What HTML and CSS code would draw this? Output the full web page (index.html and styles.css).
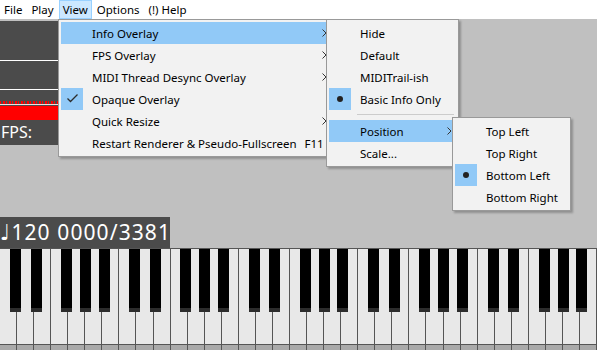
FILE: index.html
```html
<!DOCTYPE html>
<html>
<head>
<meta charset="utf-8">
<title>Piano View</title>
<link rel="stylesheet" href="styles.css">
</head>
<body>

<div class="menubar">
	<span class="mb-item">File</span>
	<span class="mb-item">Play</span>
	<span class="mb-item mb-open">View</span>
	<span class="mb-item">Options</span>
	<span class="mb-item">(!) Help</span>
</div>

<div class="stage">
	<div class="overlay">
		<div class="ov-block ov-first"></div>
		<div class="ov-line"></div>
		<div class="ov-block ov-second"></div>
		<div class="ov-line"></div>
		<div class="ov-graph"><div class="ov-ticks"></div></div>
		<div class="ov-red"></div>
		<div class="ov-fps">FPS:</div>
	</div>

	<div class="bottom">
		<div class="info"><span class="note">&#9833;</span>120 0000/3381</div>
		<div class="piano" id="piano"></div>
	</div>
</div>

<!-- View menu -->
<div class="menu menu-view">
	<div class="mi hot"><span class="mi-icon"></span><span class="mi-label">Info Overlay</span><span class="mi-arrow"></span></div>
	<div class="mi"><span class="mi-icon"></span><span class="mi-label">FPS Overlay</span><span class="mi-arrow"></span></div>
	<div class="mi"><span class="mi-icon"></span><span class="mi-label">MIDI Thread Desync Overlay</span><span class="mi-arrow"></span></div>
	<div class="mi"><span class="mi-icon checked"><svg width="22" height="22" viewBox="0 0 22 22"><polyline points="6.5,10.5 9.5,13.5 16.5,6.5" fill="none" stroke="#2b2b2b" stroke-width="1.3"/></svg></span><span class="mi-label">Opaque Overlay</span></div>
	<div class="mi"><span class="mi-icon"></span><span class="mi-label">Quick Resize</span><span class="mi-arrow"></span></div>
	<div class="mi"><span class="mi-icon"></span><span class="mi-label">Restart Renderer &amp; Pseudo-Fullscreen</span><span class="mi-key">F11</span></div>
</div>

<!-- Info Overlay submenu -->
<div class="menu menu-info">
	<div class="mi"><span class="mi-icon"></span><span class="mi-label">Hide</span></div>
	<div class="mi"><span class="mi-icon"></span><span class="mi-label">Default</span></div>
	<div class="mi"><span class="mi-icon"></span><span class="mi-label">MIDITrail-ish</span></div>
	<div class="mi"><span class="mi-icon checked"><i class="dot"></i></span><span class="mi-label">Basic Info Only</span></div>
	<div class="sep"></div>
	<div class="mi hot"><span class="mi-icon"></span><span class="mi-label">Position</span><span class="mi-arrow"></span></div>
	<div class="mi"><span class="mi-icon"></span><span class="mi-label">Scale...</span></div>
</div>

<!-- Position submenu -->
<div class="menu menu-pos">
	<div class="mi"><span class="mi-icon"></span><span class="mi-label">Top Left</span></div>
	<div class="mi"><span class="mi-icon"></span><span class="mi-label">Top Right</span></div>
	<div class="mi"><span class="mi-icon checked"><i class="dot"></i></span><span class="mi-label">Bottom Left</span></div>
	<div class="mi"><span class="mi-icon"></span><span class="mi-label">Bottom Right</span></div>
</div>

<script type="text/javascript">
	var piano=document.getElementById("piano");
	var blacks=["cs","ds","fs","gs","as"];
	for(var o=0;o<5;o++){
		var oct=document.createElement("div");
		oct.className="octave";
		for(var w=0;w<7;w++){
			var k=document.createElement("div");
			k.className="wkey";
			oct.appendChild(k);
		}
		for(var b=0;b<blacks.length;b++){
			var bk=document.createElement("div");
			bk.className="bkey "+blacks[b];
			oct.appendChild(bk);
		}
		piano.appendChild(oct);
	}
	// arrows
	var arrows=document.querySelectorAll(".mi-arrow");
	for(var i=0;i<arrows.length;i++){
		arrows[i].innerHTML='<svg width="5" height="8" viewBox="0 0 5 8"><polyline points="0.5,0.5 4,4 0.5,7.5" fill="none" stroke="#333" stroke-width="1"/></svg>';
	}
</script>
</body>
</html>
```
FILE: styles.css
```css
*{margin:0;padding:0;box-sizing:border-box;}
html,body{width:597px;height:350px;overflow:hidden;}
body{background:#c0c0c0;font:11.5px "Noto Sans","Open Sans",Arial,sans-serif;color:#000;display:flex;flex-direction:column;position:relative;}

/* menu bar */
.menubar{height:19px;background:#fff;display:flex;align-items:center;gap:1px;}
.mb-item{height:19px;line-height:17px;padding:0 3px;border:1px solid transparent;}
.mb-open{background:#cce8ff;border-color:#99d1ff;}

/* stage */
.stage{flex:1;display:flex;flex-direction:column;padding-top:2px;}
.overlay{width:200px;background:#4b4b4b;display:flex;flex-direction:column;}
.ov-first{height:39px;}
.ov-second{height:28px;}
.ov-line{height:1px;background:#fff;}
.ov-graph{height:16px;display:flex;flex-direction:column;justify-content:flex-end;padding-bottom:1px;}
.ov-ticks{height:4px;border-bottom:1px solid #f4dede;background:repeating-linear-gradient(90deg,#f00 0 1px,transparent 1px 3px,#f00 3px 5px,transparent 5px 6px);}
.ov-red{height:14px;background:#f00;}
.ov-fps{height:25px;line-height:24px;font-size:16px;color:#fff;padding-left:1px;}

.bottom{margin-top:auto;display:flex;flex-direction:column;}
.info{align-self:flex-start;width:170px;height:31px;background:#4b4b4b;color:#fff;font-size:21px;line-height:31px;padding-left:0;white-space:nowrap;letter-spacing:1.1px;}
.note{font-family:"DejaVu Sans",sans-serif;font-size:22px;letter-spacing:0;margin-right:1px;}

/* piano */
.piano{height:102px;border-top:1px solid #555;display:flex;}
.octave{flex:1;display:flex;position:relative;}
.wkey{flex:1;background:linear-gradient(#e8e8e8 0 95px,#555 95px 96px,#a9a9a9 96px);border-right:1px solid #555;}
.bkey{position:absolute;top:0;width:11px;height:63px;background:#000;border-bottom:4px solid #2c2c2c;}
.cs{left:10px;}
.ds{left:30.5px;}
.fs{left:61px;}
.gs{left:80px;}
.as{left:98.5px;}

/* popup menus */
.menu{position:absolute;background:#f2f2f2;border:1px solid #999;padding:2px;box-shadow:2px 2px 2px rgba(0,0,0,0.25);}
.menu-view{left:58px;top:19px;width:276px;}
.menu-info{left:326px;top:19px;width:133px;}
.menu-pos{left:452px;top:117px;width:119px;}
.mi{height:22px;display:flex;align-items:center;position:relative;white-space:nowrap;}
.mi.hot{background:#91c9f7;}
.mi-icon{width:22px;height:22px;flex:none;display:flex;align-items:center;justify-content:center;}
.mi-icon.checked{background:#91c9f7;}
.mi-label{padding-left:9px;}
.mi-key{margin-left:auto;padding-left:8px;margin-right:17px;}
.mi-arrow{position:absolute;right:4px;top:7px;width:5px;height:8px;display:flex;}
.dot{display:block;width:6px;height:6px;border-radius:50%;background:#222;}
.sep{height:10px;margin-left:28px;margin-right:2px;background:linear-gradient(transparent 4px,#ccc 4px 5px,transparent 5px);}
```
